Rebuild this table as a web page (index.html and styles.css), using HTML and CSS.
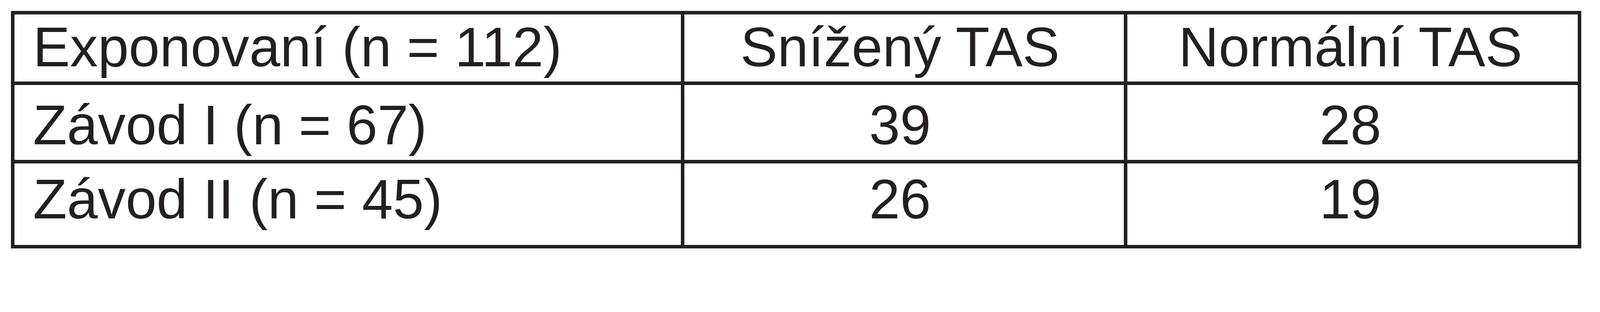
FILE: index.html
```html
<!DOCTYPE html>
<html lang="cs">
<head>
<meta charset="utf-8">
<title>Exponovaní</title>
<link rel="stylesheet" href="styles.css">
</head>
<body>
<div class="grid" role="table">
  <div class="row r1" role="row">
    <div class="cell c1" role="columnheader">Exponovaní (n = 112)</div>
    <div class="cell c2" role="columnheader">Snížený TAS</div>
    <div class="cell c3" role="columnheader">Normální TAS</div>
  </div>
  <div class="row r2" role="row">
    <div class="cell c1" role="rowheader">Závod I (n = 67)</div>
    <div class="cell c2" role="cell">39</div>
    <div class="cell c3" role="cell">28</div>
  </div>
  <div class="row r3" role="row">
    <div class="cell c1" role="rowheader">Závod II (n = 45)</div>
    <div class="cell c2" role="cell">26</div>
    <div class="cell c3" role="cell">19</div>
  </div>
</div>
</body>
</html>
```

FILE: styles.css
```css
:root {
  --u: calc(100vw / 4778);
  --line: #231f20;
}

html, body {
  margin: 0;
  padding: 0;
  background: #ffffff;
  overflow: hidden;
}

body {
  padding: calc(33 * var(--u)) 0 0 calc(33 * var(--u));
  font-family: "Liberation Sans", Arial, sans-serif;
  color: #231f20;
}

.grid {
  display: grid;
  grid-template-columns: calc(2000 * var(--u)) calc(1323 * var(--u)) calc(1355 * var(--u));
  grid-template-rows: calc(211 * var(--u)) calc(234 * var(--u)) calc(255 * var(--u));
  width: calc(4689 * var(--u));
  box-sizing: border-box;
  border-left: calc(11 * var(--u)) solid var(--line);
  border-top: calc(11 * var(--u)) solid var(--line);
}

.row {
  display: contents;
}

.cell {
  box-sizing: border-box;
  border-right: calc(11 * var(--u)) solid var(--line);
  border-bottom: calc(11 * var(--u)) solid var(--line);
  font-size: calc(166 * var(--u));
  line-height: calc(166 * var(--u));
  white-space: nowrap;
}

.c1 {
  text-align: left;
  padding-left: calc(55 * var(--u));
}

.c2 {
  text-align: center;
  padding-right: calc(24 * var(--u));
}

.c3 {
  text-align: center;
  padding-right: calc(12 * var(--u));
}

.r1 .cell { padding-top: calc(15 * var(--u)); }
.r2 .cell { padding-top: calc(37 * var(--u)); }
.r3 .cell { padding-top: calc(25 * var(--u)); }
```
